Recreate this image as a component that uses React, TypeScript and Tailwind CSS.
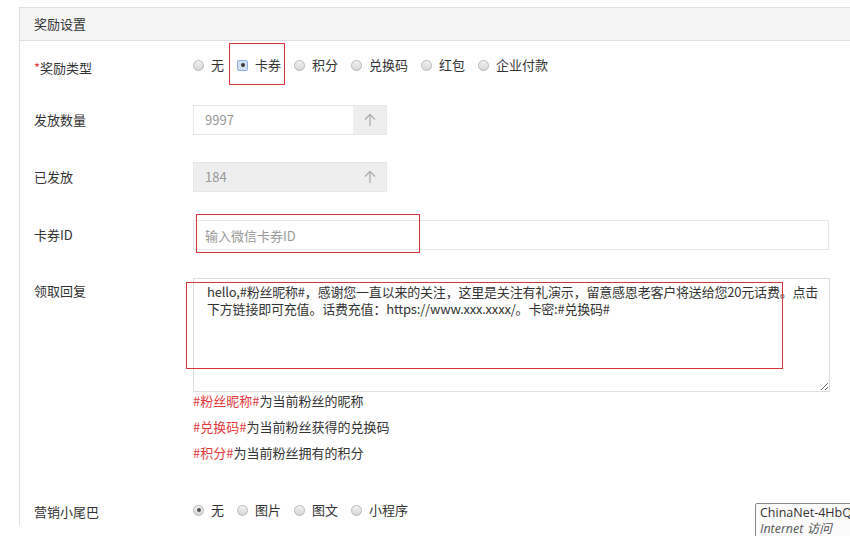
import React from "react";

const font = "font-['Microsoft_YaHei','Noto_Sans_CJK_SC',sans-serif]";

const Radio = ({ checked, focus }: { checked?: boolean; focus?: boolean }) => {
  if (focus) {
    return (
      <span className="flex h-[11px] w-[11px] items-center justify-center rounded-[2px] border border-[#8fb0dc] bg-[#d3e0f2]">
        <span className="h-[4px] w-[4px] rounded-full bg-[#3a3a3a]" />
      </span>
    );
  }
  return (
    <span className="flex h-[11px] w-[11px] items-center justify-center rounded-full border border-[#b8b8b8] bg-gradient-to-b from-[#f2f2f2] to-[#d6d6d6]">
      {checked && <span className="h-[4px] w-[4px] rounded-full bg-[#555]" />}
    </span>
  );
};

const RadioGroup = ({ items, selected, focus }: { items: string[]; selected: number; focus?: boolean }) => (
  <div className="flex h-[30px] items-center">
    {items.map((t, i) => (
      <label key={t} className="mr-[13px] flex items-center">
        <Radio checked={i === selected} focus={focus && i === selected} />
        <span className="ml-[7px] text-[13px] text-[#333]">{t}</span>
      </label>
    ))}
  </div>
);

const UpArrow = () => (
  <svg width="12" height="14" viewBox="0 0 12 14" fill="none" stroke="#a8a8a8" strokeWidth="1.2">
    <path d="M6 1.5V13" />
    <path d="M1 6.5L6 1.5L11 6.5" />
  </svg>
);

const NumberBox = ({ value, disabled }: { value: string; disabled?: boolean }) => (
  <div className="flex h-[30px] w-[194px] border border-[#e6e6e6]">
    <div className={`flex flex-1 items-center pl-[11px] text-[13px] text-[#999] ${disabled ? "bg-[#eee]" : "bg-white"}`}>
      {value}
    </div>
    <div className="flex w-[33px] items-center justify-center bg-[#eee]">
      <UpArrow />
    </div>
  </div>
);

const Label = ({ children, className = "" }: { children: React.ReactNode; className?: string }) => (
  <div className={`w-[173px] shrink-0 pl-[14px] text-[13px] text-[#333] ${className}`}>{children}</div>
);

export default function App() {
  return (
    <div className={`relative h-[536px] w-[850px] overflow-hidden bg-white ${font}`}>
      <div className="ml-[19px] mt-[7px] w-[900px] border-l border-t border-[#ddd]">
        <div className="flex h-[33px] items-center border-b border-[#ddd] bg-[#f5f5f5] pl-[14px] text-[13px] text-[#333]">
          奖励设置
        </div>

        <div className="pt-[9px]">
          <div className="flex items-center">
            <Label className="mt-[6px]">
              <span className="text-[#e4393c]">*</span>奖励类型
            </Label>
            <RadioGroup items={["无", "卡券", "积分", "兑换码", "红包", "企业付款"]} selected={1} focus />
          </div>

          <div className="mt-[25px] flex items-center">
            <Label>发放数量</Label>
            <NumberBox value="9997" />
          </div>

          <div className="mt-[27px] flex items-center">
            <Label>已发放</Label>
            <NumberBox value="184" disabled />
          </div>

          <div className="mt-[28px] flex items-center">
            <Label>卡券ID</Label>
            <input
              className="h-[30px] w-[636px] border border-[#e6e6e6] pl-[11px] text-[13px] text-[#333] outline-none placeholder:text-[#999]"
              placeholder="输入微信卡券ID"
            />
          </div>

          <div className="mt-[28px] flex items-start">
            <Label className="mt-[3px] leading-[20px]">领取回复</Label>
            <div className="flex flex-col">
              <textarea
                className="block h-[114px] w-[637px] resize-y border border-[#ddd] pb-[4px] pl-[13px] pr-0 pt-[4px] text-[13px] leading-[17px] tracking-[-0.2px] text-[#333] outline-none"
                defaultValue={"hello,#粉丝昵称#，感谢您一直以来的关注，这里是关注有礼演示，留意感恩老客户将送给您20元话费。点击\n下方链接即可充值。话费充值：https://www.xxx.xxxx/。卡密:#兑换码#"}
              />
              <div className="flex flex-col gap-[8px] text-[13px] leading-[18px] text-[#333]">
                <div>
                  <span className="text-[#e4393c]">#粉丝昵称#</span>为当前粉丝的昵称
                </div>
                <div>
                  <span className="text-[#e4393c]">#兑换码#</span>为当前粉丝获得的兑换码
                </div>
                <div>
                  <span className="text-[#e4393c]">#积分#</span>为当前粉丝拥有的积分
                </div>
              </div>
            </div>
          </div>

          <div className="mt-[33px] flex items-center">
            <Label className="mt-[3px]">营销小尾巴</Label>
            <RadioGroup items={["无", "图片", "图文", "小程序"]} selected={0} />
          </div>
        </div>
      </div>

      {/* annotation boxes */}
      <div className="absolute left-[229px] top-[43px] h-[42px] w-[56px] border border-[#d4363c]" />
      <div className="absolute left-[196px] top-[214px] h-[39px] w-[224px] border border-[#d4363c]" />
      <div className="absolute left-[186px] top-[282px] h-[87px] w-[597px] border border-[#d4363c]" />

      {/* system tooltip */}
      <div className="absolute left-[755px] top-[503px] w-[140px] rounded-[2px] border border-[#8a8a8a] bg-[#fbfbfb] pl-[4px] pt-[1px] font-['Open_Sans','Noto_Sans_CJK_SC',sans-serif] text-[12.5px] leading-[16px] text-[#333]">
        <div>ChinaNet-4HbQ</div>
        <div className="italic text-[#555]">Internet 访问</div>
      </div>
    </div>
  );
}
